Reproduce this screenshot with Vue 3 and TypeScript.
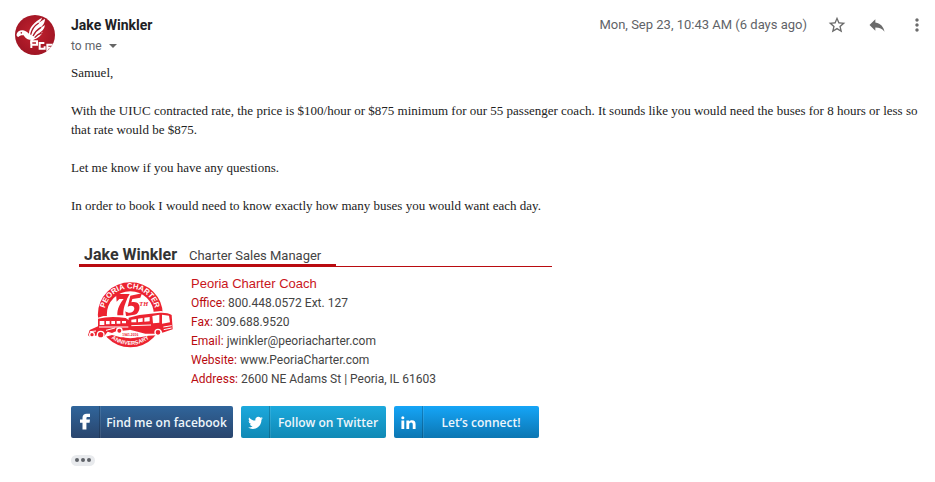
<script setup lang="ts">
import { ref } from 'vue'

interface Detail { label: string; value: string; href?: string }

const starred = ref(false)
const sender = 'Jake Winkler'
const paragraphs: string[] = [
  'Samuel,',
  'With the UIUC contracted rate, the price is $100/hour or $875 minimum for our 55 passenger coach. It sounds like you would need the buses for 8 hours or less so that rate would be $875.',
  'Let me know if you have any questions.',
  'In order to book I would need to know exactly how many buses you would want each day.',
]
const details: Detail[] = [
  { label: 'Office:', value: '800.448.0572 Ext. 127' },
  { label: 'Fax:', value: '309.688.9520' },
  { label: 'Email:', value: 'jwinkler@peoriacharter.com', href: 'mailto:jwinkler@peoriacharter.com' },
  { label: 'Website:', value: 'www.PeoriaCharter.com', href: '#website' },
  { label: 'Address:', value: '2600 NE Adams St | Peoria, IL 61603' },
]
</script>

<template>
  <article class="message">
    <svg class="avatar" viewBox="0 0 120 120" aria-hidden="true">
      <defs>
        <radialGradient id="avatarFill" cx="50%" cy="45%" r="60%">
          <stop offset="0" stop-color="#c3222f" />
          <stop offset="1" stop-color="#9c1423" />
        </radialGradient>
        <clipPath id="avatarClip"><circle cx="60" cy="60" r="60" /></clipPath>
      </defs>
      <g clip-path="url(#avatarClip)">
        <rect width="120" height="120" fill="url(#avatarFill)" />
        <path fill="#fff" d="M5 57C7 49 15 45 24 46C31 47 37 51 42 56C42 38 57 21 81 8C79 15 75 20 70 24C79 19 86 13 90 12C90 24 82 34 74 40C81 37 86 32 90 30C88 43 80 50 70 56C76 55 80 52 83 50C79 62 68 70 56 74L45 88L47 74C37 76 31 69 26 61C20 60 14 61 10 66C5 65 4 61 5 57Z" />
        <path fill="none" stroke="#ad1828" stroke-width="4" d="M47 59C50 43 60 31 71 24M54 63C60 51 68 43 78 37M59 68C65 61 72 56 80 54M17 53l4 1" />
        <path fill="none" stroke="#fff" stroke-width="6" d="M49 99V79H66V89H52M88 84H74V101H89V94M118 89H97V107H110M99 98H114" />
      </g>
    </svg>

    <div class="main">
      <header class="top">
        <div>
          <h1 class="sender">{{ sender }}</h1>
          <button class="recipient" type="button">to me <i class="caret"></i></button>
        </div>
        <div class="tools">
          <time class="date">Mon, Sep 23, 10:43 AM (6 days ago)</time>
          <button type="button" aria-label="Star" :aria-pressed="starred" @click="starred = !starred">
            <svg viewBox="0 0 24 24"><path d="M22 9.24l-7.19-.62L12 2 9.19 8.63 2 9.24l5.46 4.73L5.82 21 12 17.27 18.18 21l-1.63-7.03L22 9.24zM12 15.4l-3.76 2.27 1-4.28-3.32-2.88 4.38-.38L12 6.1l1.71 4.04 4.38.38-3.32 2.88 1 4.28L12 15.4z" /></svg>
          </button>
          <button type="button" aria-label="Reply">
            <svg viewBox="0 0 24 24"><path d="M10 9V5l-7 7 7 7v-4.1c5 0 8.5 1.6 11 5.1-1-5-4-10-11-11z" /></svg>
          </button>
          <button type="button" aria-label="More">
            <svg viewBox="0 0 24 24"><path d="M12 8c1.100 0 2-.9 2-2s-.9-2-2-2-2 .9-2 2 .9 2 2 2zm0 2c-1.100 0-2 .9-2 2s.9 2 2 2 2-.9 2-2-.9-2-2-2zm0 6c-1.100 0-2 .9-2 2s.9 2 2 2 2-.9 2-2-.9-2-2-2z" /></svg>
          </button>
        </div>
      </header>

      <div class="body">
        <p v-for="text in paragraphs" :key="text">{{ text }}</p>
      </div>

      <section class="signature">
        <div class="title">
          <div class="title-main"><strong>{{ sender }}</strong><span>Charter Sales Manager</span></div>
        </div>
        <div class="card">
          <svg class="logo" viewBox="0 0 300 240" role="img" aria-label="Peoria Charter 75th anniversary">
            <defs>
              <path id="arcTop" d="M74 130A77 77 0 1 1 226 130" />
              <path id="arcBottom" d="M60 119A91 91 0 0 0 242 119" />
            </defs>
            <circle cx="151" cy="119" r="84" fill="#fff" stroke="#ec2330" stroke-width="27" />
            <g fill="#ec2330">
              <path d="M108 57H149L142 70C136 86 129 100 130 121H112C111 101 121 84 131 72H118L110 80Z" />
              <path d="M151 62L186 55L181 68L157 72L154 82C171 78 181 87 178 102C174 121 154 130 138 122L136 109C148 118 161 112 163 102C164 92 153 89 143 95Z" />
              <text x="178" y="93" font-size="19" class="mark">TH</text>
            </g>
            <path fill="#fff" d="M22 163L50 150L49 130L70 123L141 123L207 112L243 108L280 116L283 170L243 180L205 182L180 187H122L96 180L72 187L25 188Z" />
            <path fill="#ec2330" d="M54 131Q91 122 137 129L149 137V165L128 167L121 161L108 169L96 174L83 170L70 187H55L53 181L31 186L24 181L29 165L54 154ZM146 128L178 120L240 113Q263 112 275 120L278 163L247 173Q240 154 225 176L196 176L144 163Z" />
            <path fill="#fff" d="M59 138H73V150H59ZM78 138H89V148H78ZM94 138H105V147H94ZM110 138H121V146H110ZM126 138H138V145H126ZM154 134L169 132V142L154 142ZM174 131L188 129V140L174 142ZM193 128L209 126V139L193 140ZM217 123L238 119V143L219 145ZM246 119L267 122L270 142L246 146Z" />
            <g fill="#ec2330" stroke="#fff" stroke-width="4">
              <circle cx="62" cy="179" r="10" /><circle cx="36" cy="179" r="7" /><circle cx="118" cy="167" r="8" /><circle cx="234" cy="172" r="9" />
            </g>
            <path fill="none" stroke="#fff" stroke-width="3" d="M57 156H145M78 166L105 159M30 170L48 168M154 152L213 150M250 156L275 152M251 164L275 159" />
            <g class="ring-text" text-anchor="middle">
              <text font-size="23"><textPath href="#arcTop" startOffset="50%">PEORIA CHARTER</textPath></text>
              <text font-size="17"><textPath href="#arcBottom" startOffset="50%">ANNIVERSARY</textPath></text>
            </g>
            <text x="151" y="184" text-anchor="middle" class="years">1941-2016</text>
          </svg>
          <dl class="details">
            <div class="company">Peoria Charter Coach</div>
            <div v-for="item in details" :key="item.label">
              <dt>{{ item.label }}</dt>
              <dd><a v-if="item.href" :href="item.href">{{ item.value }}</a><template v-else>{{ item.value }}</template></dd>
            </div>
          </dl>
        </div>

        <nav class="social">
          <a href="#facebook" class="facebook">
            <span class="glyph"><svg viewBox="0 0 24 24"><path d="M9 21V13H6V9H9V7C9 3.500 11 2 14 2H18V6H15.500C14 6 13.700 6.500 13.700 8V9H18L17.500 13H13.700V21Z" /></svg></span>
            <span class="caption">Find me on facebook</span>
          </a>
          <a href="#twitter" class="twitter">
            <span class="glyph"><svg viewBox="0 0 24 24"><path d="M22.460 6c-.77.35-1.600.58-2.460.69.88-.53 1.560-1.370 1.880-2.380-.83.5-1.750.85-2.720 1.050C18.370 4.500 17.260 4 16 4c-2.350 0-4.270 1.920-4.270 4.290 0 .34.040.67.110.98C8.280 9.090 5.110 7.380 3 4.790c-.37.63-.58 1.370-.58 2.150 0 1.490.75 2.810 1.910 3.560-.71 0-1.370-.2-1.950-.5v.030c0 2.080 1.480 3.820 3.440 4.210a4.220 4.220 0 0 1-1.930.070 4.280 4.280 0 0 0 4 2.980 8.521 8.521 0 0 1-5.330 1.840c-.34 0-.68-.02-1.020-.06C3.440 20.290 5.700 21 8.120 21 16 21 20.330 14.460 20.330 8.790c0-.19 0-.37-.01-.56.84-.6 1.560-1.360 2.140-2.230z" /></svg></span>
            <span class="caption">Follow on Twitter</span>
          </a>
          <a href="#linkedin" class="linkedin">
            <span class="glyph"><svg viewBox="0 0 24 24"><path d="M2 9H6V21H2ZM4 3A2.200 2.200 0 1 1 4 7.400A2.200 2.200 0 1 1 4 3ZM9 9H13V10.700C14 9.300 15.200 8.700 17 8.700C20.500 8.700 22 10.800 22 14.500V21H18V15C18 13 17.300 12 15.700 12C14 12 13 13.100 13 15V21H9Z" /></svg></span>
            <span class="caption">Let’s connect!</span>
          </a>
        </nav>
      </section>

      <button class="trimmed" type="button" aria-label="Show trimmed content"><i></i><i></i><i></i></button>
    </div>
  </article>
</template>

<style>
body { margin: 0; background: #fff; }
</style>

<style scoped>
.message { display: flex; align-items: flex-start; gap: 16px; padding: 15px 8px 16px 15px; font-family: Roboto, sans-serif; color: #222; }
.avatar { width: 40px; height: 40px; flex: none; }
.main { flex: 1; min-width: 0; }
button { border: 0; padding: 0; background: none; font: inherit; color: inherit; cursor: pointer; }
a { color: inherit; text-decoration: none; }
.top { display: flex; justify-content: space-between; align-items: flex-start; height: 48px; }
.sender { margin: 0; font-size: 14px; line-height: 20px; font-weight: 700; color: #202124; }
.recipient { display: flex; align-items: center; gap: 7px; font-size: 12px; line-height: 22px; color: #5f6368; }
.caret { border: 4px solid transparent; border-top-color: #666; border-bottom: 0; }
.tools { display: flex; align-items: center; gap: 20px; color: #5f6368; }
.date { font-size: 13px; line-height: 20px; }
.tools button { display: flex; }
.tools svg { width: 20px; height: 20px; fill: #6b6b6b; }
.body { font: 13px/19px "Liberation Serif", serif; }
.body p { margin: 0 0 19px; }
.signature { padding-top: 11px; }
.title { margin-left: 8px; width: 473px; max-width: 100%; border-bottom: 1px solid #b90b10; }
.title-main { display: flex; align-items: baseline; gap: 12px; width: 252px; height: 19px; line-height: 19px; margin-bottom: -1px; padding-left: 5px; border-bottom: 3px solid #b90b10; white-space: nowrap; }
.title strong { font-size: 16px; color: #333; }
.title span { font-size: 13px; color: #444; }
.card { display: flex; gap: 11px; padding: 7px 0 0 9px; }
.logo { width: 100px; height: 80px; flex: none; margin-top: 1px; }
.ring-text { fill: #fff; font-family: "Liberation Sans", sans-serif; font-weight: 700; }
.mark { font-family: "Liberation Serif", serif; font-weight: 700; font-style: italic; }
.years { fill: #ec2330; font: 700 10px "Liberation Sans", sans-serif; }
.details { margin: 0; font-size: 12px; line-height: 19px; color: #444; }
.company { font-family: "Liberation Sans", sans-serif; font-size: 13px; line-height: 20px; color: #c9151b; }
dt, dd { display: inline; margin: 0; }
dt { margin-right: 3px; color: #b90b10; }
.social { display: flex; gap: 8px; margin-top: 17px; }
.social a { display: flex; width: 145px; height: 32px; border-radius: 2px; color: #eef6fb; overflow: hidden; }
.social .facebook { width: 162px; background: linear-gradient(#30659b, #29456d); }
.social .twitter { background: linear-gradient(#1ca9dd, #1089b5); }
.social .linkedin { background: linear-gradient(#15a5f7, #0c76b2); }
.glyph { display: flex; align-items: center; justify-content: center; width: 28px; border-right: 1px solid #0003; box-shadow: 1px 0 #ffffff18; }
.glyph svg { width: 17px; height: 17px; fill: #fff; }
.facebook .glyph svg { width: 20px; height: 20px; }
.caption { flex: 1; text-align: center; font: 600 12px/34px "Open Sans", sans-serif; white-space: nowrap; }
.trimmed { display: flex; align-items: center; justify-content: center; gap: 2px; width: 24px; height: 11px; margin-top: 17px; padding-bottom: 1px; border-radius: 6px; background: #e8eaed; }
.trimmed i { width: 4px; height: 4px; border-radius: 50%; background: #5f6368; }
</style>
